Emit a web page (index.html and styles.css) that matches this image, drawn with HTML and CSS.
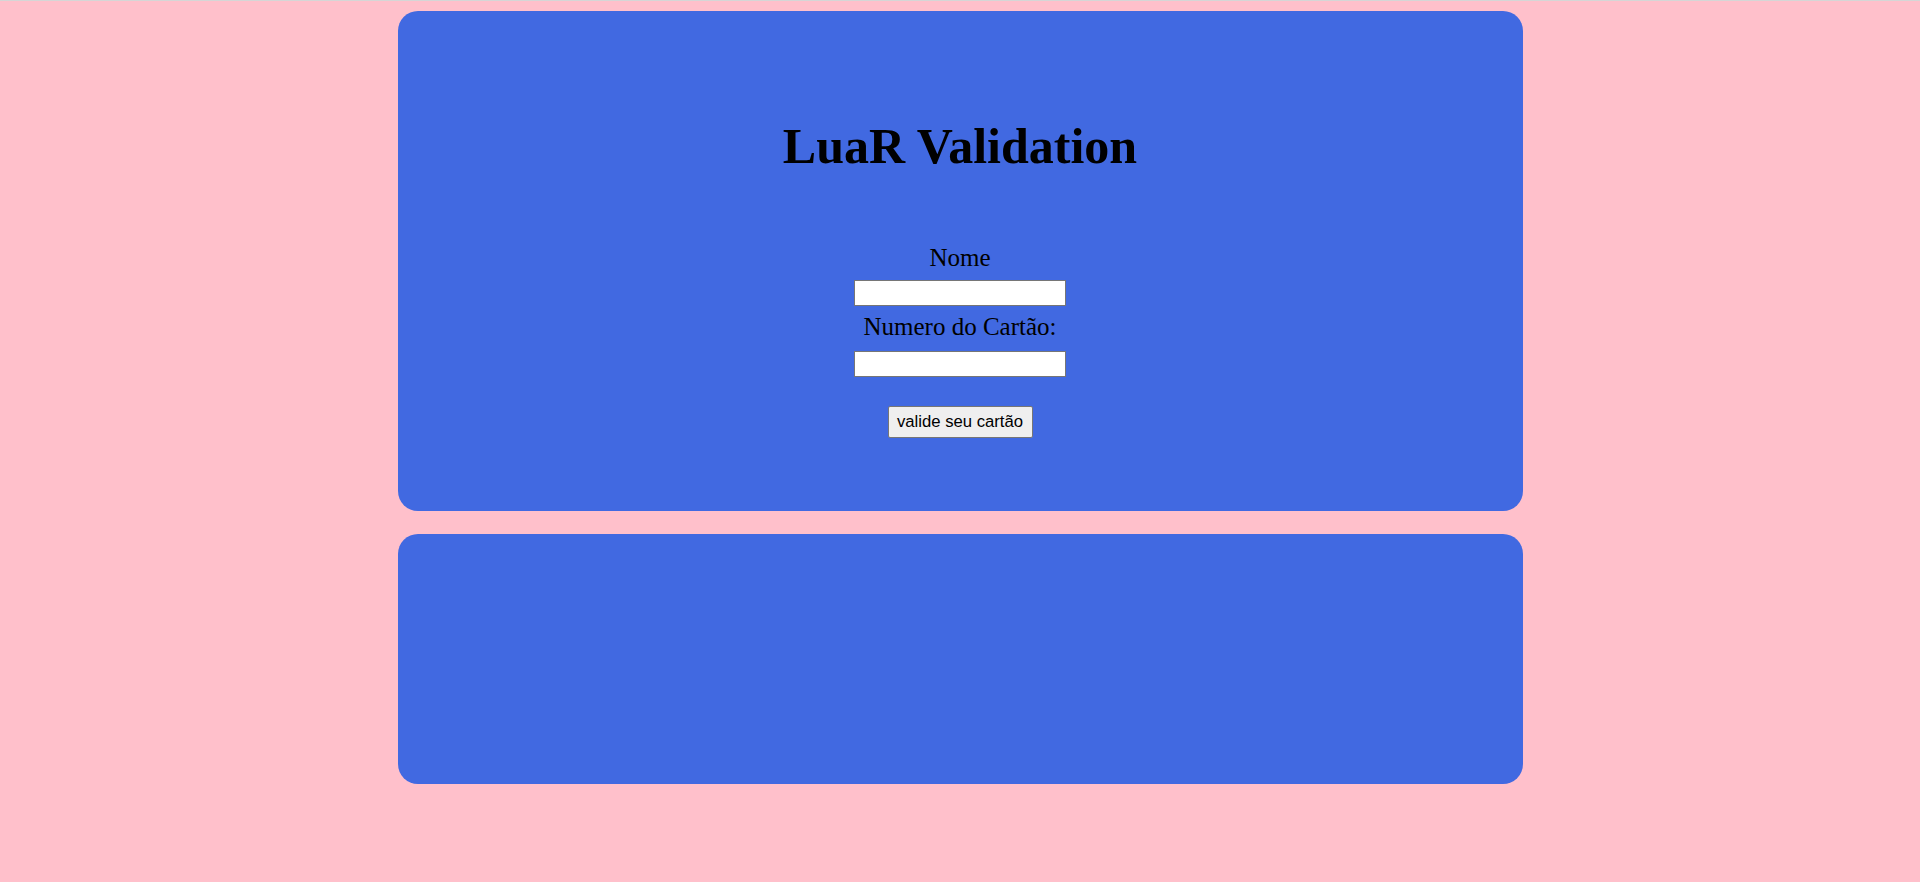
FILE: index.html
```html
<!DOCTYPE html>
<html lang="pt-BR">
<head>
<meta charset="utf-8">
<title>LuaR Validation</title>
<link rel="stylesheet" href="styles.css">
</head>
<body>
<main class="page">
  <section class="card card-form">
    <h1 class="title">LuaR Validation</h1>
    <form class="form">
      <label class="label label-first" for="nome">Nome</label>
      <input class="field field-first" type="text" id="nome">
      <label class="label label-second" for="numero">Numero do Cartão:</label>
      <input class="field field-second" type="text" id="numero">
      <button class="btn" type="button">valide seu cartão</button>
    </form>
  </section>
  <section class="card card-result"></section>
</main>
</body>
</html>
```
FILE: styles.css
```css
html, body {
  margin: 0;
  padding: 0;
}
body {
  background: #ffc0cb;
  border-top: 1px solid #d6d6d6;
  min-height: 881px;
  font-family: "Liberation Serif", "Times New Roman", serif;
  color: #000;
}
.page {
  display: flex;
  flex-direction: column;
  align-items: center;
  gap: 23px;
  padding-top: 10px;
}
.card {
  width: 1125px;
  background: #4169e1;
  border-radius: 20px;
  box-sizing: border-box;
}
.card-form {
  height: 500px;
  display: flex;
  flex-direction: column;
  align-items: center;
  padding-top: 107px;
}
.card-result {
  height: 250px;
}
.title {
  margin: 0;
  font-size: 50px;
  line-height: 56px;
  height: 56px;
  font-weight: bold;
}
.form {
  display: flex;
  flex-direction: column;
  align-items: center;
  margin-top: 70px;
}
.label {
  font-size: 25px;
  line-height: 28px;
  height: 28px;
}
.label-second {
  margin-top: 7px;
}
.field {
  width: 212px;
  height: 26px;
  box-sizing: border-box;
  border: 1px solid #767676;
  background: #fff;
  padding: 1px 2px;
  margin: 0;
  font-family: "Liberation Sans", Arial, sans-serif;
  font-size: 16px;
}
.field-first {
  margin-top: 8px;
}
.field-second {
  margin-top: 10px;
}
.btn {
  margin-top: 29px;
  width: 145px;
  height: 32px;
  box-sizing: border-box;
  background: #efefef;
  border: 1px solid #767676;
  border-radius: 2px;
  padding: 0;
  font-family: "Liberation Sans", Arial, sans-serif;
  font-size: 16.7px;
  color: #000;
}
```
